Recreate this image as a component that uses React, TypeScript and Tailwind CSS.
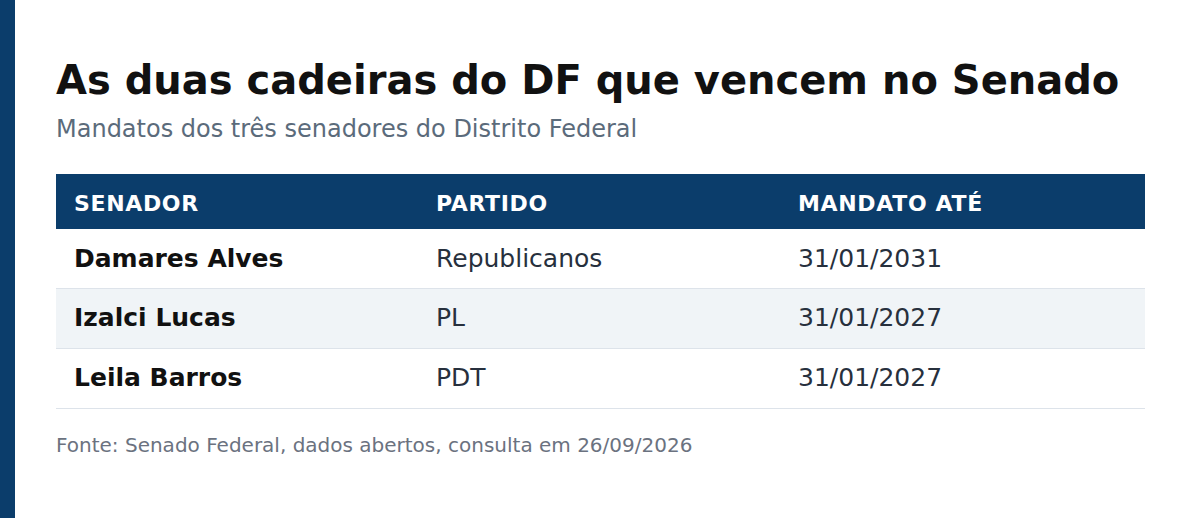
const rows = [
  { nome: "Damares Alves", partido: "Republicanos", mandato: "31/01/2031" },
  { nome: "Izalci Lucas", partido: "PL", mandato: "31/01/2027" },
  { nome: "Leila Barros", partido: "PDT", mandato: "31/01/2027" },
];

export default function App() {
  return (
    <div
      className="flex h-[518px] w-[1200px] bg-white"
      style={{ fontFamily: '"DejaVu Sans", sans-serif' }}
    >
      <div className="w-[15px] shrink-0 bg-[#0b3d6b]" />
      <div className="flex-1 pl-[41px] pr-[55px] pt-[56px]">
        <h1 className="text-[40px] font-bold leading-[48px] text-[#111111]">
          As duas cadeiras do DF que vencem no Senado
        </h1>
        <p className="mt-[9px] text-[24px] leading-[32px] text-[#5b6b7b]">
          Mandatos dos três senadores do Distrito Federal
        </p>

        <table className="mt-[29px] w-full table-fixed border-collapse">
          <colgroup>
            <col className="w-[362px]" />
            <col className="w-[362px]" />
            <col />
          </colgroup>
          <thead>
            <tr className="bg-[#0b3d6b] text-left text-[22px] font-bold uppercase tracking-[0.03em] text-white">
              <th className="h-[55px] px-[18px] pt-[3px]">Senador</th>
              <th className="h-[55px] px-[18px] pt-[3px]">Partido</th>
              <th className="h-[55px] px-[18px] pt-[3px]">Mandato até</th>
            </tr>
          </thead>
          <tbody>
            {rows.map((r, i) => (
              <tr
                key={r.nome}
                className={`border-b border-[#dde3ea] text-[25px] ${i % 2 === 1 ? "bg-[#f0f4f7]" : "bg-white"}`}
              >
                <td className={`${i === 0 ? "h-[59px]" : "h-[60px]"} px-[18px] font-bold text-[#111111]`}>{r.nome}</td>
                <td className="px-[18px] text-[#27303d]">{r.partido}</td>
                <td className="px-[18px] text-[#27303d]">{r.mandato}</td>
              </tr>
            ))}
          </tbody>
        </table>

        <p className="mt-[22px] text-[20px] leading-[28px] text-[#6b7280]">
          Fonte: Senado Federal, dados abertos, consulta em 26/09/2026
        </p>
      </div>
    </div>
  );
}
